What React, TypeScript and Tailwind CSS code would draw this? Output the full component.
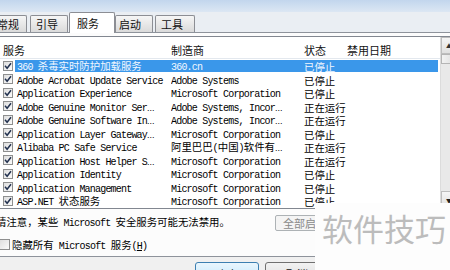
type Service = {
  name: string;
  maker: string;
  status: string;
  selected?: boolean;
};

const services: Service[] = [
  { name: "360 杀毒实时防护加载服务", maker: "360.cn", status: "已停止", selected: true },
  { name: "Adobe Acrobat Update Service", maker: "Adobe Systems", status: "已停止" },
  { name: "Application Experience", maker: "Microsoft Corporation", status: "已停止" },
  { name: "Adobe Genuine Monitor Ser...", maker: "Adobe Systems, Incor...", status: "正在运行" },
  { name: "Adobe Genuine Software In...", maker: "Adobe Systems, Incor...", status: "正在运行" },
  { name: "Application Layer Gateway...", maker: "Microsoft Corporation", status: "已停止" },
  { name: "Alibaba PC Safe Service", maker: "阿里巴巴(中国)软件有...", status: "正在运行" },
  { name: "Application Host Helper S...", maker: "Microsoft Corporation", status: "正在运行" },
  { name: "Application Identity", maker: "Microsoft Corporation", status: "已停止" },
  { name: "Application Management", maker: "Microsoft Corporation", status: "已停止" },
  { name: "ASP.NET 状态服务", maker: "Microsoft Corporation", status: "已停止" },
];

const mono = "font-['Liberation_Mono',monospace] text-[10px] tracking-[-0.8px]";
const cjk = "font-['Noto_Sans_CJK_SC',sans-serif] text-[10.4px]";

// SimSun style: half width latin, full width CJK
function Mixed({ text }: { text: string }) {
  let ellipsis = text.endsWith("...");
  let body = ellipsis ? text.slice(0, -3) : text;
  let runs = body.split(/([\x20-\x7e]+)/).filter((r) => r !== "");
  return (
    <span className="whitespace-pre">
      {runs.map((run, i) =>
        /^[\x20-\x7e]/.test(run) ? (
          <span key={i} className={mono}>
            {run}
          </span>
        ) : (
          <span key={i} className={cjk}>
            {run}
          </span>
        )
      )}
      {ellipsis && (
        <span className="font-['Liberation_Sans',sans-serif] text-[9px]">...</span>
      )}
    </span>
  );
}

function CheckBox({ checked, size = "w-[10px] h-[10px]" }: { checked: boolean; size?: string }) {
  return (
    <div
      className={`${size} shrink-0 flex items-center justify-center border border-[#8e8f8f] bg-gradient-to-br from-[#dedede] to-[#fbfbfb]`}
    >
      {checked && (
        <svg width="8" height="8" viewBox="0 0 8 8">
          <path d="M1 3.8 L3.1 6.2 L7 1.2" stroke="#22314f" strokeWidth="1.5" fill="none" />
        </svg>
      )}
    </div>
  );
}

function Tab({
  label,
  className,
  selected,
}: {
  label: string;
  className: string;
  selected?: boolean;
}) {
  return (
    <div
      className={
        selected
          ? `relative z-10 -mb-px h-[21px] flex items-center border border-b-0 border-[#8c8e94] bg-white rounded-t-[2px] ${className}`
          : `h-[17px] flex items-center border border-b-0 border-[#8c8e94] bg-gradient-to-b from-[#f6f6f6] to-[#dadada] rounded-t-[2px] ${className}`
      }
    >
      <span className="font-['Noto_Sans_CJK_SC',sans-serif] text-[11px] leading-none text-[#111]">
        {label}
      </span>
    </div>
  );
}

function ServiceRow({ service }: { service: Service }) {
  let sel = service.selected;
  return (
    <div className="flex items-center h-[13.5px] leading-[13.5px]">
      <div className="w-[15px] pl-[3px] flex items-center">
        <CheckBox checked />
      </div>
      <div
        className={
          sel
            ? "flex items-center w-[423px] h-[12.5px] bg-[#3a97ea] text-[#f2f8ff]"
            : "flex items-center w-[423px] h-[12.5px] text-black"
        }
      >
        <div className="w-[156px] pl-[2px] overflow-hidden">
          <Mixed text={service.name} />
        </div>
        <div className="w-[133px] overflow-hidden">
          <Mixed text={service.maker} />
        </div>
        <div className="flex-1">
          <span className={cjk}>{service.status}</span>
        </div>
      </div>
    </div>
  );
}

export default function App() {
  return (
    <div className="relative w-[450px] h-[270px] overflow-hidden bg-[#f0f0f0] font-['Noto_Sans_CJK_SC',sans-serif]">
      <div className="h-[12px] bg-gradient-to-b from-[#c2d6ed] to-[#dce7f3]" />

      <div className="flex items-end h-[20px] bg-[#eaeef3]">
        <Tab label="常规" className="ml-[-14px] w-[41px] pl-[10px]" />
        <Tab label="引导" className="ml-[3px] w-[38px] pl-[5px]" />
        <Tab label="服务" className="ml-[1px] w-[46px] pl-[7px]" selected />
        <Tab label="启动" className="w-[38px] pl-[3px]" />
        <Tab label="工具" className="ml-[2px] w-[40px] pl-[5px]" />
      </div>

      <div className="h-[225px] border-t border-b border-[#8e939b] bg-[#fcfcfc] pt-[3px]">
        <div className="flex border-t border-b border-[#828790] bg-white h-[173px]">
          <div className="w-[440px] shrink-0">
            <div className="flex items-center h-[22px] pt-[6px] border-b border-[#e3e8ee] text-[11px] text-[#111]">
              <div className="w-[171px] pl-[3px]">服务</div>
              <div className="w-[133px]">制造商</div>
              <div className="w-[43px]">状态</div>
              <div className="flex-1">禁用日期</div>
            </div>
            {services.map((s) => (
              <ServiceRow key={s.name} service={s} />
            ))}
          </div>
          <div className="w-[17px] shrink-0 flex flex-col bg-[#e9e9e9] border-l border-[#dcdcdc]">
            <div className="h-[17px] flex items-center justify-center border border-[#bdbdbd] bg-gradient-to-b from-[#f5f5f5] to-[#e0e0e0] text-[6px] text-[#333]">
              ▲
            </div>
            <div className="h-[10px] border border-[#b5b5b5] bg-gradient-to-r from-[#f2f2f2] to-[#dcdcdc]" />
            <div className="flex-1" />
            <div className="h-[17px] flex items-start justify-center pt-[4px] border border-[#bdbdbd] bg-gradient-to-b from-[#f5f5f5] to-[#e0e0e0] text-[6px] text-[#222]">
              ▼
            </div>
          </div>
        </div>

        <div className="flex h-[25px]">
          <div className="ml-[-4px] w-[279px] mt-[4px] leading-[12px] text-black">
            <Mixed text="请注意，某些 Microsoft 安全服务可能无法禁用。" />
          </div>
          <div className="mt-[6px] h-[16px] w-[80px] flex items-center pl-[7px] border border-[#adb2b5] rounded-[2px] bg-[#f4f4f4] text-[11px] text-[#8a8a8a]">
            全部启用(E)
          </div>
        </div>

        <div className="flex items-center h-[21px] ml-[-1px] text-black">
          <CheckBox checked={false} size="w-[11px] h-[11px]" />
          <div className="ml-[2px] leading-[12px] whitespace-pre">
            <Mixed text="隐藏所有 Microsoft 服务" />
            <span className={mono}>
              (<span className="underline">H</span>)
            </span>
          </div>
        </div>
      </div>

      <div className="flex pt-[5px]">
        <div className="ml-[195px] w-[64px] h-[21px] flex justify-center pt-[3px] border border-[#3c7fb1] rounded-[3px] bg-gradient-to-b from-[#eaf6fd] to-[#bee6fd] text-[11px] text-[#111]">
          确定
        </div>
        <div className="ml-[6px] w-[64px] h-[21px] flex justify-center pt-[3px] border border-[#707070] rounded-[3px] bg-gradient-to-b from-[#f2f2f2] to-[#dddddd] text-[11px] text-[#111]">
          取消
        </div>
      </div>

      <div className="absolute left-[315px] top-[203px] w-[135px] h-[67px] bg-[#fdfdfd]">
        <div className="mt-[9px] ml-[7px] h-[31px] leading-[31px] text-[31px] text-[#bcbcbc] whitespace-nowrap">
          软件技巧
        </div>
      </div>
    </div>
  );
}
